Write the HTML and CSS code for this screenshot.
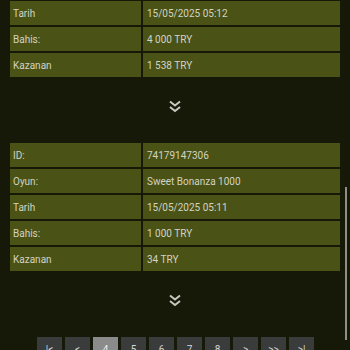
FILE: index.html
```html
<!DOCTYPE html>
<html lang="tr">
<head>
    <meta charset="UTF-8">
    <meta name="viewport" content="width=device-width, initial-scale=1.0">
    <title>Bahis Geçmişi</title>
    <link rel="stylesheet" href="styles.css">
</head>
<body>
    <div class="history">
        <div class="bet first">
            <div class="bet-table">
                <div class="cell label">Tarih</div>
                <div class="cell">15/05/2025 05:12</div>
                <div class="cell label">Bahis:</div>
                <div class="cell">4 000 TRY</div>
                <div class="cell label">Kazanan</div>
                <div class="cell">1 538 TRY</div>
            </div>
            <div class="more">
                <svg width="14" height="13" viewBox="0 0 14 13"><path d="M2 1.5 L7 5.5 L12 1.5 M2 7 L7 11 L12 7" fill="none" stroke="#c8c8bf" stroke-width="2"/></svg>
            </div>
        </div>
        <div class="bet">
            <div class="bet-table">
                <div class="cell label">ID:</div>
                <div class="cell">74179147306</div>
                <div class="cell label">Oyun:</div>
                <div class="cell">Sweet Bonanza 1000</div>
                <div class="cell label">Tarih</div>
                <div class="cell">15/05/2025 05:11</div>
                <div class="cell label">Bahis:</div>
                <div class="cell">1 000 TRY</div>
                <div class="cell label">Kazanan</div>
                <div class="cell">34 TRY</div>
            </div>
            <div class="more">
                <svg width="14" height="13" viewBox="0 0 14 13"><path d="M2 1.5 L7 5.5 L12 1.5 M2 7 L7 11 L12 7" fill="none" stroke="#c8c8bf" stroke-width="2"/></svg>
            </div>
        </div>
        <div class="pager">
            <button class="page">|&lt;</button>
            <button class="page">&lt;</button>
            <button class="page active">4</button>
            <button class="page">5</button>
            <button class="page">6</button>
            <button class="page">7</button>
            <button class="page">8</button>
            <button class="page">&gt;</button>
            <button class="page">&gt;&gt;</button>
            <button class="page">&gt;|</button>
        </div>
    </div>
    <div class="scrollbar"></div>
</body>
</html>
```

FILE: styles.css
```css
html, body {
    margin: 0;
    height: 350px;
    overflow: hidden;
}
body {
    position: relative;
    font-family: Roboto, "Liberation Sans", sans-serif;
    background-color: #161907;
    color: #d2d3c4;
}
.history {
    padding: 0 10px;
}
.bet.first {
    margin-top: 1px;
}
.bet-table {
    display: grid;
    grid-template-columns: 131px 1fr;
    grid-auto-rows: 24px;
    gap: 2px;
}
.cell {
    display: flex;
    align-items: center;
    padding-left: 3px;
    font-size: 10px;
    background-color: #4a5215;
}
.cell:nth-child(even) {
    padding-left: 4px;
}
.more {
    display: flex;
    justify-content: center;
    padding: 23px 0 30px;
}
.more svg {
    display: block;
}
.pager {
    display: flex;
    justify-content: center;
    gap: 3px;
    margin-left: 1px;
}
.page {
    width: 25px;
    height: 25px;
    padding: 0;
    border: none;
    font-family: Roboto, "Liberation Sans", sans-serif;
    font-size: 10px;
    color: #d8d8d8;
    background-color: #3a3b3b;
}
.page.active {
    background-color: #8b8b8b;
    color: #eeeeee;
}
.scrollbar {
    position: absolute;
    left: 345px;
    top: 187px;
    width: 2px;
    height: 153px;
    background-color: #8e8f86;
}
```
